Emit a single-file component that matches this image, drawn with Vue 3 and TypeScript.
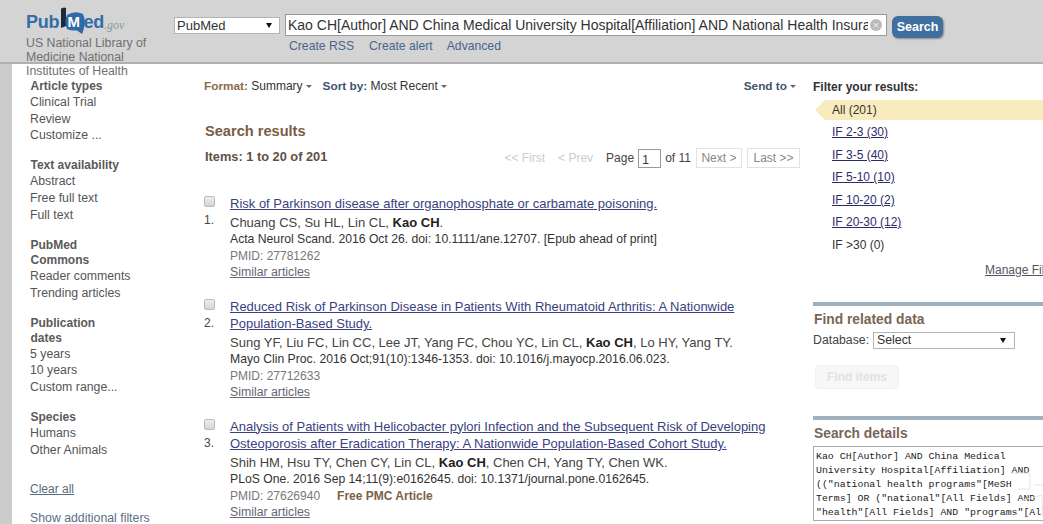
<script setup lang="ts">
interface Part { text: string; bold?: boolean }
interface Article {
  title: string[]
  authors: Part[]
  journal: string
  pmid: string
  free?: boolean
}

const filterGroups = [
  { heads: ['Article types'], items: ['Clinical Trial', 'Review', 'Customize ...'] },
  { heads: ['Text availability'], items: ['Abstract', 'Free full text', 'Full text'] },
  { heads: ['PubMed', 'Commons'], items: ['Reader comments', 'Trending articles'] },
  { heads: ['Publication', 'dates'], items: ['5 years', '10 years', 'Custom range...'] },
  { heads: ['Species'], items: ['Humans', 'Other Animals'] },
]

const articles: Article[] = [
  {
    title: ['Risk of Parkinson disease after organophosphate or carbamate poisoning.'],
    authors: [{ text: 'Chuang CS, Su HL, Lin CL, ' }, { text: 'Kao CH', bold: true }, { text: '.' }],
    journal: 'Acta Neurol Scand. 2016 Oct 26. doi: 10.1111/ane.12707. [Epub ahead of print]',
    pmid: '27781262',
  },
  {
    title: ['Reduced Risk of Parkinson Disease in Patients With Rheumatoid Arthritis: A Nationwide', 'Population-Based Study.'],
    authors: [{ text: 'Sung YF, Liu FC, Lin CC, Lee JT, Yang FC, Chou YC, Lin CL, ' }, { text: 'Kao CH', bold: true }, { text: ', Lo HY, Yang TY.' }],
    journal: 'Mayo Clin Proc. 2016 Oct;91(10):1346-1353. doi: 10.1016/j.mayocp.2016.06.023.',
    pmid: '27712633',
  },
  {
    title: ['Analysis of Patients with Helicobacter pylori Infection and the Subsequent Risk of Developing', 'Osteoporosis after Eradication Therapy: A Nationwide Population-Based Cohort Study.'],
    authors: [{ text: 'Shih HM, Hsu TY, Chen CY, Lin CL, ' }, { text: 'Kao CH', bold: true }, { text: ', Chen CH, Yang TY, Chen WK.' }],
    journal: 'PLoS One. 2016 Sep 14;11(9):e0162645. doi: 10.1371/journal.pone.0162645.',
    pmid: '27626940',
    free: true,
  },
]

const impactFilters = ['IF 2-3 (30)', 'IF 3-5 (40)', 'IF 5-10 (10)', 'IF 10-20 (2)', 'IF 20-30 (12)']

const detailLines = [
  'Kao CH[Author] AND China Medical',
  'University Hospital[Affiliation] AND',
  '(("national health programs"[MeSH',
  'Terms] OR ("national"[All Fields] AND',
  '"health"[All Fields] AND "programs"[All',
]
</script>

<template>
  <div class="page">
    <header class="header">
      <div class="brand">
        <div class="logo">
          <span class="logo-pub">Pub</span>
          <svg class="logo-mark" width="26" height="28" viewBox="0 0 26 28">
            <path d="M1 1.5 L4 0.5 L6 1 L6 19 L1 21 Z" fill="#1c2a3a" />
            <path d="M7 8 Q15 3 23 7 Q26 14 24 21 Q23 25 22 27 L17 23.5 Q11 24 7 22 Q4 15 7 8 Z" fill="#2c6aa8" />
            <text x="7.5" y="20" class="logo-m">M</text>
          </svg>
          <span class="logo-pub logo-ed">ed</span>
          <span class="logo-gov">.gov</span>
        </div>
        <div class="brand-text">US National Library of<br />Medicine National<br />Institutes of Health</div>
      </div>
      <div class="search">
        <div class="search-row">
          <div class="select db-select"><span>PubMed</span><i class="arrow"></i></div>
          <div class="term">
            <span class="term-text">Kao CH[Author] AND China Medical University Hospital[Affiliation] AND National Health Insura</span>
            <span class="term-clear">×</span>
          </div>
          <button class="search-btn">Search</button>
        </div>
        <div class="search-links">
          <a>Create RSS</a>
          <a>Create alert</a>
          <a>Advanced</a>
        </div>
      </div>
    </header>

    <div class="body">
      <aside class="filters">
        <section v-for="group in filterGroups" :key="group.heads[0]" class="filter-group">
          <h4 v-for="head in group.heads" :key="head">{{ head }}</h4>
          <a v-for="item in group.items" :key="item">{{ item }}</a>
        </section>
        <a class="clear-all">Clear all</a>
        <a class="show-more">Show additional filters</a>
      </aside>

      <main class="results">
        <div class="toolbar">
          <div class="toolbar-left">
            <span><b class="tan">Format:</b> Summary<i class="caret"></i></span>
            <span><b class="navy">Sort by:</b> Most Recent<i class="caret"></i></span>
          </div>
          <b class="navy send">Send to<i class="caret"></i></b>
        </div>
        <h3 class="results-title">Search results</h3>
        <div class="paging">
          <b class="items-count">Items: 1 to 20 of 201</b>
          <div class="pager">
            <span class="off">&lt;&lt; First</span>
            <span class="off prev">&lt; Prev</span>
            <span>Page</span>
            <input class="page-input" value="1" />
            <span>of 11</span>
            <span class="page-btn next">Next &gt;</span>
            <span class="page-btn last">Last &gt;&gt;</span>
          </div>
        </div>

        <article v-for="(item, i) in articles" :key="item.pmid" class="article">
          <div class="article-side">
            <span class="check"></span>
            <span class="num">{{ i + 1 }}.</span>
          </div>
          <div class="article-main">
            <a v-for="line in item.title" :key="line" class="title">{{ line }}</a>
            <p class="authors"><template v-for="part in item.authors" :key="part.text"><b v-if="part.bold">{{ part.text }}</b><template v-else>{{ part.text }}</template></template></p>
            <p class="journal">{{ item.journal }}</p>
            <p class="pmid">PMID: {{ item.pmid }}<b v-if="item.free" class="free">Free PMC Article</b></p>
            <a class="similar">Similar articles</a>
          </div>
        </article>
      </main>

      <aside class="side">
        <b class="side-head">Filter your results:</b>
        <div class="if-current">All (201)</div>
        <a v-for="f in impactFilters" :key="f" class="if-row">{{ f }}</a>
        <span class="if-row if-none">IF &gt;30 (0)</span>
        <a class="manage">Manage Filters</a>

        <section class="portlet related">
          <h3>Find related data</h3>
          <div class="db-row">
            <span>Database:</span>
            <div class="select related-select"><span>Select</span><i class="arrow"></i></div>
          </div>
          <button class="find-btn" disabled>Find items</button>
        </section>

        <section class="portlet details">
          <h3>Search details</h3>
          <div class="detail-box">
            <div v-for="line in detailLines" :key="line">{{ line }}</div>
            <!-- faint watermark that sits over the box in the screenshot -->
            <svg class="watermark" width="60" height="70" viewBox="0 0 60 70">
              <path d="M0 8 H18 V24 H6 M22 20 H50 M8 36 L30 30 V52 M40 34 V58 H20 M14 60 L34 68" fill="none" stroke="#e6e6e6" stroke-width="1" />
            </svg>
          </div>
        </section>
      </aside>
    </div>
  </div>
</template>

<style>
html, body {
  margin: 0;
  background: #fff;
  overflow: hidden;
}
</style>

<style scoped>
.page {
  width: 1043px;
  height: 524px;
  overflow: hidden;
  font-family: "Liberation Sans", Arial, sans-serif;
  font-size: 12px;
  color: #444;
  background: #fff;
}

a {
  cursor: pointer;
}

p, h3, h4 {
  margin: 0;
}

/* header */
.header {
  display: flex;
  height: 62px;
  background: #d4d4d4;
  border-bottom: 2px solid #b0b0b0;
  padding-left: 26px;
}

.brand {
  width: 148px;
  flex: none;
  padding-top: 5px;
  height: 57px;
}

.logo {
  display: flex;
  align-items: flex-start;
  height: 30px;
}

.logo-pub {
  margin-top: 7px;
  font-size: 18px;
  line-height: 21px;
  font-weight: bold;
  color: #2f6ea6;
  letter-spacing: -0.2px;
}

.logo-mark {
  margin: 2px 0 0 1px;
}

.logo-m {
  font-family: "Liberation Sans", sans-serif;
  font-size: 15px;
  font-weight: bold;
  fill: #fff;
}

.logo-ed {
  margin-left: -3px;
}

.logo-gov {
  margin: 13px 0 0 0;
  font-family: "Liberation Serif", serif;
  font-style: italic;
  font-size: 12px;
  line-height: 14px;
  color: #8a9a9a;
}

.brand-text {
  margin-top: 1px;
  font-size: 12.3px;
  line-height: 14px;
  color: #707070;
  position: relative;
}

.search {
  flex: none;
  width: 780px;
  padding-top: 14px;
}

.search-row {
  display: flex;
  align-items: center;
  height: 22px;
}

.select {
  display: flex;
  align-items: center;
  justify-content: space-between;
  box-sizing: border-box;
  background: #fff;
  border: 1px solid #b4b4b4;
  color: #333;
}

.arrow {
  width: 0;
  height: 0;
  border-left: 3px solid transparent;
  border-right: 3px solid transparent;
  border-top: 5px solid #111;
}

.db-select {
  width: 106px;
  height: 17px;
  padding: 0 7px 0 2px;
  margin-right: 5px;
  font-size: 13px;
}

.term {
  box-sizing: border-box;
  width: 602px;
  height: 22px;
  display: flex;
  align-items: center;
  justify-content: space-between;
  padding: 0 4px 0 2px;
  background: #fff;
  border: 1px solid #999;
  font-size: 14px;
  color: #333;
  overflow: hidden;
}

.term-text {
  white-space: nowrap;
  overflow: hidden;
  flex: none;
  width: 580px;
}

.term-clear {
  flex: none;
  width: 12px;
  height: 12px;
  border-radius: 50%;
  background: #bbb;
  color: #eee;
  font-size: 11px;
  line-height: 12px;
  text-align: center;
}

.search-btn {
  margin: 3px 0 0 5px;
  width: 51px;
  height: 22px;
  padding: 0;
  border: 0;
  border-radius: 6px;
  background: #3f6f9e;
  box-shadow: 1px 1px 2px #888;
  color: #fff;
  font-family: inherit;
  font-size: 12.5px;
  font-weight: bold;
}

.search-links {
  display: flex;
  gap: 15px;
  margin: 3px 0 0 115px;
  font-size: 12.2px;
  line-height: 14px;
  color: #47658a;
}

.search-links a:last-child {
  margin-left: -1px;
}

/* page body */
.body {
  display: flex;
  height: 460px;
  border-left: 12px solid #cccccc;
}

.filters {
  flex: none;
  width: 174px;
  padding: 15px 0 0 18px;
  box-sizing: border-box;
}

.filter-group {
  display: flex;
  flex-direction: column;
  margin-bottom: 14.3px;
}

.filter-group h4 {
  font-size: 12px;
  line-height: 15px;
  font-weight: bold;
  color: #5a5a5a;
  padding-left: 0.5px;
}

.filter-group a {
  font-size: 12.3px;
  line-height: 16.7px;
  color: #555;
}

.clear-all {
  display: block;
  margin-top: 24px;
  line-height: 14px;
  color: #5a6a78;
  text-decoration: underline;
}

.show-more {
  display: block;
  margin-top: 15px;
  font-size: 12.3px;
  line-height: 15px;
  color: #5a7085;
}

/* results */
.results {
  flex: none;
  width: 596px;
  margin-left: 18px;
}

.toolbar {
  display: flex;
  justify-content: space-between;
  padding-top: 15px;
  line-height: 14px;
  color: #333;
}

.toolbar-left {
  display: flex;
  gap: 11px;
}

.toolbar b {
  font-size: 11.8px;
  font-weight: bold;
}

.tan {
  color: #8a6a4a;
}

.navy {
  color: #3d5570;
}

.caret {
  display: inline-block;
  margin-left: 3px;
  vertical-align: 2px;
  border-left: 3px solid transparent;
  border-right: 3px solid transparent;
  border-top: 3px solid #666;
}

.send {
  margin-right: 4px;
}

.results-title {
  margin-top: 30px;
  padding-left: 1px;
  font-size: 14.6px;
  line-height: 17px;
  color: #7a5c44;
}

.paging {
  display: flex;
  justify-content: space-between;
  align-items: flex-start;
  margin-top: 9px;
  padding-left: 1px;
}

.items-count {
  font-size: 12.8px;
  line-height: 15px;
  color: #5f5040;
}

.pager {
  display: flex;
  align-items: center;
  gap: 4px;
  margin-top: -1px;
  line-height: 18px;
  color: #444;
}

.off {
  color: #ccc;
}

.prev {
  margin: 0 9px 0 9px;
}

.page-input {
  box-sizing: border-box;
  width: 23px;
  height: 19px;
  margin: 1px 0 0 0;
  padding: 3px 0 0 3px;
  border: 1px solid #999;
  font-family: inherit;
  font-size: 12px;
  color: #333;
}

.page-btn {
  border: 1px solid #e2e2e2;
  color: #888;
  margin-left: 1px;
}

.next {
  padding: 0 4.5px;
}

.last {
  padding: 0 5.5px;
}

.article {
  display: flex;
  margin-top: 18px;
}

.article:first-of-type {
  margin-top: 27px;
}

.article-side {
  flex: none;
  width: 26px;
  display: flex;
  flex-direction: column;
  padding-top: 1px;
}

.check {
  box-sizing: border-box;
  width: 11px;
  height: 11px;
  border: 1px solid #bbb;
  border-radius: 2px;
  background: linear-gradient(#eee, #d4d4d4);
}

.num {
  margin-top: 6px;
  line-height: 15px;
  color: #444;
}

.article-main {
  display: flex;
  flex-direction: column;
  align-items: flex-start;
}

.title {
  font-size: 13px;
  line-height: 17.5px;
  color: #3b3f80;
  text-decoration: underline;
  white-space: nowrap;
}

.authors {
  margin-top: 1px;
  font-size: 13px;
  line-height: 17px;
  color: #444;
}

.authors b {
  color: #222;
}

.journal {
  font-size: 12.2px;
  line-height: 17px;
  color: #333;
}

.pmid {
  line-height: 17px;
  color: #777;
}

.free {
  margin-left: 17px;
  color: #7a6248;
}

.similar {
  margin-top: -1px;
  font-size: 12.3px;
  line-height: 16px;
  color: #667;
  text-decoration: underline;
}

/* right column */
.side {
  flex: none;
  width: 300px;
  margin-left: 13px;
  display: flex;
  flex-direction: column;
  align-items: flex-start;
}

.side-head {
  margin-top: 16px;
  line-height: 14px;
  color: #333;
}

.if-current {
  box-sizing: border-box;
  width: 100%;
  height: 20px;
  margin: 6px 0 0 2px;
  padding-left: 17px;
  line-height: 20px;
  color: #333;
  background: #f8ebbd;
  clip-path: polygon(0 50%, 10px 0, 100% 0, 100% 100%, 10px 100%);
}

.if-row {
  margin-left: 19px;
  line-height: 22.6px;
  color: #2c2c6a;
  text-decoration: underline;
}

.if-current + .if-row {
  margin-top: 1px;
}

.if-none {
  color: #333;
  text-decoration: none;
}

.manage {
  margin: 6px 0 0 172px;
  line-height: 15px;
  color: #556;
  text-decoration: underline;
  white-space: nowrap;
}

.portlet {
  width: 100%;
  border-top: 4px solid #9fb0bf;
}

.portlet h3 {
  font-size: 13.8px;
  line-height: 17px;
  color: #7a6555;
  padding-left: 1px;
}

.related {
  margin-top: 24px;
  padding-top: 5px;
}

.db-row {
  display: flex;
  align-items: center;
  gap: 4px;
  margin-top: 4px;
  font-size: 12.3px;
  color: #444;
}

.related-select {
  width: 142px;
  height: 17px;
  padding: 0 8px 0 3px;
}

.find-btn {
  display: block;
  width: 84px;
  height: 24px;
  margin: 16px 0 0 2px;
  border: 1px solid #f0f0f0;
  border-radius: 4px;
  background: #f7f7f7;
  color: #e2e2e2;
  font-family: inherit;
  font-size: 12px;
  font-weight: bold;
}

.details {
  margin-top: 27px;
  padding-top: 5px;
}

.detail-box {
  position: relative;
  box-sizing: border-box;
  width: 262px;
  height: 75px;
  margin-top: 4px;
  padding: 3px 0 0 2px;
  border: 1px solid #aaa;
  font-family: "Liberation Mono", monospace;
  font-size: 9.9px;
  line-height: 14px;
  color: #222;
  white-space: nowrap;
  overflow: hidden;
}

.watermark {
  position: absolute;
  left: 198px;
  top: 18px;
}
</style>
